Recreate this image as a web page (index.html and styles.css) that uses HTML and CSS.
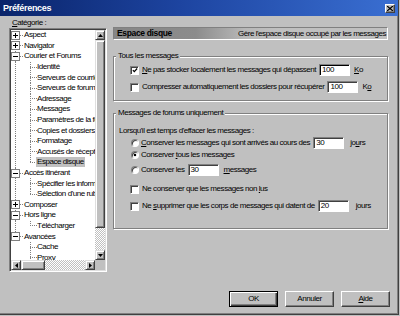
FILE: index.html
```html
<!DOCTYPE html>
<html lang="fr">
<head>
<meta charset="utf-8">
<title>Préférences</title>
<link rel="stylesheet" href="styles.css">
</head>
<body>
<div class="window">
  <div class="titlebar">
    <span class="title">Préférences</span>
    <span class="close"><svg width="6" height="5" viewBox="0 0 6 5"><path d="M0 0 L6 5 M6 0 L0 5" stroke="#000" stroke-width="1.3"/></svg></span>
  </div>
  <div class="content">
    <div class="main">
      <div class="left">
        <div class="cat-label"><u>C</u>atégorie :</div>
        <div class="treebox">
          <div class="tree-top">
            <div class="tree-list">
              <div class="trow"><span class="cell top first"><span class="exp plus"></span></span><span class="tx">Aspect</span></div>
              <div class="trow"><span class="cell top"><span class="exp plus"></span></span><span class="tx">Navigator</span></div>
              <div class="trow"><span class="cell top"><span class="exp minus"></span></span><span class="tx">Courier et Forums</span></div>
              <div class="trow"><span class="cell pipe"></span><span class="cell tee"></span><span class="tx">Identité</span></div>
              <div class="trow"><span class="cell pipe"></span><span class="cell tee"></span><span class="tx">Serveurs de courrier</span></div>
              <div class="trow"><span class="cell pipe"></span><span class="cell tee"></span><span class="tx">Serveurs de forums</span></div>
              <div class="trow"><span class="cell pipe"></span><span class="cell tee"></span><span class="tx">Adressage</span></div>
              <div class="trow"><span class="cell pipe"></span><span class="cell tee"></span><span class="tx">Messages</span></div>
              <div class="trow"><span class="cell pipe"></span><span class="cell tee"></span><span class="tx">Paramètres de la fenêtre</span></div>
              <div class="trow"><span class="cell pipe"></span><span class="cell tee"></span><span class="tx">Copies et dossiers</span></div>
              <div class="trow"><span class="cell pipe"></span><span class="cell tee"></span><span class="tx">Formatage</span></div>
              <div class="trow"><span class="cell pipe"></span><span class="cell tee"></span><span class="tx">Accusés de réception</span></div>
              <div class="trow"><span class="cell pipe"></span><span class="cell end"></span><span class="tx sel">Espace disque</span></div>
              <div class="trow"><span class="cell top"><span class="exp minus"></span></span><span class="tx">Accès itinérant</span></div>
              <div class="trow"><span class="cell pipe"></span><span class="cell tee"></span><span class="tx">Spécifier les informations</span></div>
              <div class="trow"><span class="cell pipe"></span><span class="cell end"></span><span class="tx">Sélection d'une rubrique</span></div>
              <div class="trow"><span class="cell top"><span class="exp plus"></span></span><span class="tx">Composer</span></div>
              <div class="trow"><span class="cell top"><span class="exp minus"></span></span><span class="tx">Hors ligne</span></div>
              <div class="trow"><span class="cell pipe"></span><span class="cell end"></span><span class="tx">Télécharger</span></div>
              <div class="trow"><span class="cell top last"><span class="exp minus"></span></span><span class="tx">Avancées</span></div>
              <div class="trow"><span class="cell"></span><span class="cell tee"></span><span class="tx">Cache</span></div>
              <div class="trow"><span class="cell"></span><span class="cell tee"></span><span class="tx">Proxy</span></div>
              <div class="trow"><span class="cell"></span><span class="cell end"></span><span class="tx">Logiciels</span></div>
            </div>
            <div class="vscroll">
              <span class="sbtn"><svg width="5" height="3" viewBox="0 0 5 3"><path d="M2.5 0 L5 3 L0 3Z" fill="#000"/></svg></span>
              <span class="vthumb"></span>
              <span class="track"></span>
              <span class="sbtn"><svg width="5" height="3" viewBox="0 0 5 3"><path d="M0 0 L5 0 L2.5 3Z" fill="#000"/></svg></span>
            </div>
          </div>
          <div class="tree-bottom">
            <div class="hscroll">
              <span class="sbtn"><svg width="3" height="5" viewBox="0 0 3 5"><path d="M0 2.5 L3 0 L3 5Z" fill="#000"/></svg></span>
              <span class="hthumb"></span>
              <span class="track"></span>
              <span class="sbtn"><svg width="3" height="5" viewBox="0 0 3 5"><path d="M0 0 L3 2.5 L0 5Z" fill="#000"/></svg></span>
            </div>
            <div class="corner"></div>
          </div>
        </div>
      </div>

      <div class="right">
        <div class="header">
          <span class="h-title">Espace disque</span>
          <span class="h-desc">Gère l'espace disque occupé par les messages</span>
        </div>

        <div class="group g1">
          <div class="legend">Tous les messages</div>
          <div class="row r-a">
            <span class="cb"><svg width="7" height="7" viewBox="0 0 7 7"><path d="M1 3 L2.7 4.8 L6 1.2" fill="none" stroke="#000" stroke-width="1.4"/></svg></span>
            <span class="lbl"><u>N</u>e pas stocker localement les messages qui dépassent</span>
            <span class="field focus">100</span>
            <span class="unit u4"><u>K</u>o</span>
          </div>
          <div class="row r-b">
            <span class="cb"></span>
            <span class="lbl">Compresser automatiquement les dossiers pour récupérer</span>
            <span class="field">100</span>
            <span class="unit u4">K<u>o</u></span>
          </div>
        </div>

        <div class="group g2">
          <div class="legend">Messages de forums uniquement</div>
          <div class="row plain r-when">Lorsqu'il est temps d'effacer les messages :</div>
          <div class="row radio-row r-1">
            <span class="rb"></span>
            <span class="lbl"><u>C</u>onserver les messages qui sont arrivés au cours des</span>
            <span class="field">30</span>
            <span class="unit u6">jo<u>u</u>rs</span>
          </div>
          <div class="row radio-row r-2">
            <span class="rb on"></span>
            <span class="lbl">Conserver <u>t</u>ous les messages</span>
          </div>
          <div class="row radio-row r-3">
            <span class="rb"></span>
            <span class="lbl">Conserver les</span>
            <span class="field">30</span>
            <span class="unit u5"><u>m</u>essages</span>
          </div>
          <div class="row r-4">
            <span class="cb"></span>
            <span class="lbl">Ne conserver que les messages non <u>l</u>us</span>
          </div>
          <div class="row r-5">
            <span class="cb"></span>
            <span class="lbl">Ne <u>s</u>upprimer que les corps de messages qui datent de</span>
            <span class="field">20</span>
            <span class="unit u7">jours</span>
          </div>
        </div>
      </div>
    </div>

    <div class="buttons">
      <span class="btn default">OK</span>
      <span class="btn">Annuler</span>
      <span class="btn"><u>A</u>ide</span>
    </div>
  </div>
</div>
</body>
</html>
```

FILE: styles.css
```css
html, body {
  margin: 0;
  padding: 0;
}
body {
  width: 400px;
  height: 316px;
  overflow: hidden;
  background: #c0c0c0;
  font-family: "Liberation Sans", Arial, sans-serif;
  font-size: 8px;
  letter-spacing: -0.45px;
  color: #000;
}
u { text-decoration: underline; text-underline-offset: 1px; }

.window {
  width: 399px;
  height: 315px;
  box-sizing: border-box;
  border-right: 1px solid #404040;
  border-bottom: 1px solid #404040;
  box-shadow: inset -1px -1px #808080;
  background: #c0c0c0;
  display: flex;
  flex-direction: column;
}

/* title bar */
.titlebar {
  height: 16px;
  flex: none;
  display: flex;
  align-items: center;
  justify-content: space-between;
  padding: 0 3px 0 3px;
  background: linear-gradient(to right, #0a246a 0%, #1d44a0 45%, #3a6fd2 100%);
}
.title {
  color: #fff;
  font-weight: bold;
  font-size: 9px;
  letter-spacing: -0.3px;
  line-height: 12px;
}
.close {
  width: 10px;
  height: 9px;
  box-sizing: border-box;
  background: #c0c0c0;
  border: 1px solid;
  border-color: #fff #404040 #404040 #fff;
  box-shadow: inset -1px -1px #808080;
  display: flex;
  align-items: center;
  justify-content: center;
}
.close svg { display: block; }

/* content */
.content {
  flex: 1;
  display: flex;
  flex-direction: column;
  padding: 2px 10px 7px 9px;
}
.main {
  display: flex;
  gap: 6px;
}
.left {
  width: 98px;
  flex: none;
}
.cat-label {
  height: 10px;
  line-height: 10px;
  padding-left: 3px;
}

/* tree */
.treebox {
  height: 244px;
  box-sizing: border-box;
  border: 1px solid;
  border-color: #808080 #fff #fff #808080;
  box-shadow: inset 1px 1px #404040, inset -1px -1px #dfdfdf;
  padding: 1px;
  display: flex;
  flex-direction: column;
}
.tree-top {
  height: 230px;
  display: flex;
}
.tree-list {
  flex: 1;
  background: #fff;
  overflow: hidden;
}
.trow {
  height: 10.6px;
  display: flex;
  align-items: center;
  white-space: nowrap;
}
.cell {
  width: 13px;
  height: 100%;
  flex: none;
  display: flex;
  align-items: center;
}
.top {
  background:
    repeating-linear-gradient(to right, #808080 0 1px, transparent 1px 2px) 9px 50% / 4px 1px no-repeat,
    repeating-linear-gradient(to bottom, #808080 0 1px, transparent 1px 2px) 4px 0 / 1px 100% no-repeat;
}
.top.first {
  background:
    repeating-linear-gradient(to right, #808080 0 1px, transparent 1px 2px) 9px 50% / 4px 1px no-repeat,
    repeating-linear-gradient(to bottom, #808080 0 1px, transparent 1px 2px) 4px 100% / 1px 50% no-repeat;
}
.top.last {
  background:
    repeating-linear-gradient(to right, #808080 0 1px, transparent 1px 2px) 9px 50% / 4px 1px no-repeat,
    repeating-linear-gradient(to bottom, #808080 0 1px, transparent 1px 2px) 4px 0 / 1px 50% no-repeat;
}
.pipe {
  background: repeating-linear-gradient(to bottom, #808080 0 1px, transparent 1px 2px) 4px 0 / 1px 100% no-repeat;
}
.tee {
  background:
    repeating-linear-gradient(to right, #808080 0 1px, transparent 1px 2px) 6px 50% / 7px 1px no-repeat,
    repeating-linear-gradient(to bottom, #808080 0 1px, transparent 1px 2px) 6px 0 / 1px 100% no-repeat;
}
.end {
  background:
    repeating-linear-gradient(to right, #808080 0 1px, transparent 1px 2px) 6px 50% / 7px 1px no-repeat,
    repeating-linear-gradient(to bottom, #808080 0 1px, transparent 1px 2px) 6px 0 / 1px 50% no-repeat;
}
.exp {
  width: 9px;
  height: 9px;
  box-sizing: border-box;
  border: 1px solid #808080;
  background: #fff;
}
.exp.minus {
  background: linear-gradient(#000, #000) center / 5px 1px no-repeat, #fff;
}
.exp.plus {
  background:
    linear-gradient(#000, #000) center / 5px 1px no-repeat,
    linear-gradient(#000, #000) center / 1px 5px no-repeat,
    #fff;
}
.tx {
  line-height: 10px;
}
.tx.sel {
  background: #c0c0c0;
  margin-left: -1px;
  padding: 0 1px;
}

/* scrollbars */
.vscroll {
  width: 10px;
  flex: none;
  display: flex;
  flex-direction: column;
}
.sbtn {
  width: 10px;
  height: 10px;
  flex: none;
  box-sizing: border-box;
  background: #c0c0c0;
  border: 1px solid;
  border-color: #dfdfdf #404040 #404040 #dfdfdf;
  box-shadow: inset 1px 1px #fff, inset -1px -1px #808080;
  display: flex;
  align-items: center;
  justify-content: center;
}
.sbtn svg { display: block; }
.vthumb, .hthumb {
  flex: none;
  box-sizing: border-box;
  background: #c0c0c0;
  border: 1px solid;
  border-color: #dfdfdf #404040 #404040 #dfdfdf;
  box-shadow: inset 1px 1px #fff, inset -1px -1px #808080;
}
.vthumb { height: 188px; }
.hthumb { width: 24px; }
.track {
  flex: 1;
  background: repeating-conic-gradient(#fff 0 25%, #c0c0c0 0 50%) 0 0 / 2px 2px;
}
.tree-bottom {
  height: 10px;
  display: flex;
}
.hscroll {
  flex: 1;
  display: flex;
}
.corner {
  width: 10px;
  background: #c0c0c0;
}

/* right side */
.right {
  width: 275px;
  flex: none;
  padding-top: 9px;
}
.header {
  height: 13px;
  box-sizing: border-box;
  border: 1px solid;
  border-color: #808080 #fff #fff #808080;
  display: flex;
  align-items: center;
  justify-content: space-between;
  padding: 0 1px 0 3px;
  background: linear-gradient(to right, #868686 0%, #8c8c8c 30%, #b8b8b8 48%, #c0c0c0 60%, #c0c0c0 100%);
  white-space: nowrap;
}
.h-title {
  font-weight: bold;
  font-size: 8.5px;
  letter-spacing: -0.35px;
  line-height: 11px;
}
.h-desc {
  line-height: 11px;
}

.group {
  border: 1px solid #808080;
  box-shadow: inset 1px 1px #fff, 1px 1px #fff;
}
.g1 {
  margin-top: 16px;
  padding-bottom: 7px;
}
.g2 {
  margin-top: 12px;
  padding-bottom: 16px;
}
.legend {
  width: max-content;
  margin: -6px 0 0 2px;
  padding: 0 2px;
  height: 10px;
  line-height: 10px;
  background: #c0c0c0;
}
.row {
  height: 12px;
  display: flex;
  align-items: center;
  padding-left: 16px;
  white-space: nowrap;
}
.row.plain { padding-left: 5px; }
.row.radio-row { padding-left: 17px; }
.r-a { margin-top: 3px; }
.r-b { margin-top: 5px; }
.r-when { margin-top: 6px; }
.r-1 { margin-top: 1px; }
.r-2 { margin-top: 0; }
.r-3 { margin-top: 3px; }
.r-4 { margin-top: 7px; }
.r-5 { margin-top: 5px; }

.cb {
  width: 9px;
  height: 9px;
  flex: none;
  box-sizing: border-box;
  background: #fff;
  border: 1px solid;
  border-color: #808080 #fff #fff #808080;
  box-shadow: inset 1px 1px #404040;
  margin-right: 3px;
  display: flex;
  align-items: center;
  justify-content: center;
}
.cb svg { display: block; margin: 1px 0 0 1px; }
.rb {
  width: 8px;
  height: 8px;
  flex: none;
  box-sizing: border-box;
  border-radius: 50%;
  background: #fff;
  border: 1px solid;
  border-color: #808080 #fff #fff #808080;
  box-shadow: inset 1px 1px #404040;
  margin-right: 2px;
}
.rb.on {
  background: radial-gradient(circle, #000 0 1.4px, #fff 1.6px);
}
.lbl {
  line-height: 10px;
}
.field {
  width: 31px;
  height: 12px;
  flex: none;
  box-sizing: border-box;
  margin-left: 3px;
  background: #fff;
  border: 1px solid;
  border-color: #808080 #fff #fff #808080;
  box-shadow: inset 1px 1px #404040;
  padding-left: 2px;
  line-height: 10px;
}
.field.focus {
  box-shadow: inset 1px 1px #000;
}
.unit { line-height: 10px; }
.u4 { margin-left: 4px; }
.u5 { margin-left: 5px; }
.u6 { margin-left: 6px; }
.u7 { margin-left: 7px; }

/* buttons */
.buttons {
  margin-top: auto;
  margin-right: -2px;
  display: flex;
  justify-content: flex-end;
  gap: 7px;
}
.btn {
  width: 49px;
  height: 16px;
  box-sizing: border-box;
  background: #c0c0c0;
  border: 1px solid;
  border-color: #fff #404040 #404040 #fff;
  box-shadow: inset -1px -1px #808080;
  display: flex;
  align-items: center;
  justify-content: center;
  line-height: 10px;
}
.btn.default {
  border-color: #000;
  box-shadow: inset 1px 1px #fff, inset -1px -1px #404040, inset -2px -2px #808080;
}
```
